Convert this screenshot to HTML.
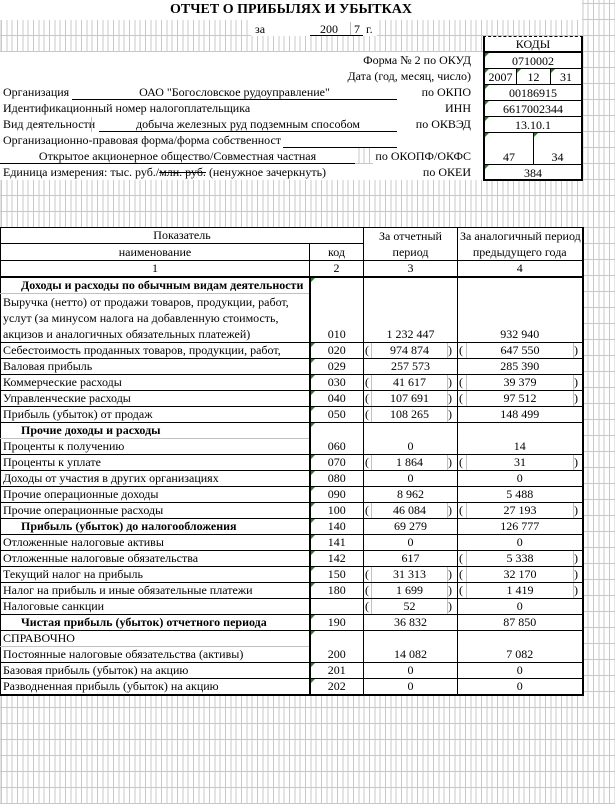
<!DOCTYPE html>
<html><head><meta charset="utf-8">
<style>
*{margin:0;padding:0;box-sizing:border-box}
html,body{width:615px;height:804px;overflow:hidden}
body{position:relative;font-family:"Liberation Serif","DejaVu Serif",serif;font-size:12px;color:#000;
background-color:#fff;
background-image:repeating-linear-gradient(to right,#c8c8c8 0 1px,transparent 1px 5.333px),repeating-linear-gradient(to bottom,#c8c8c8 0 1px,transparent 1px 16px);
background-position:1px 0,0 3px;}
.a{position:absolute;white-space:nowrap;line-height:16px}
.w{position:absolute;background:#fff}
.r{text-align:right}.c{text-align:center}
.ul{position:absolute;height:1px;background:#000}
.box{position:absolute;left:483px;top:36px;width:100px;height:145px;background:#fff;border-left:2px solid #000;border-right:2px solid #000;border-bottom:2px solid #000;border-top:1px dashed #000}
.hl{position:absolute;height:1px;background:#000}
.vl{position:absolute;width:1px;background:#000}
.gt{position:absolute;width:0;height:0;border-top:4px solid #1a8a1a;border-right:4px solid transparent}
table{position:absolute;left:0;top:227px;border-collapse:collapse;table-layout:fixed;background:#fff;width:582px}
td{border:1px solid #000;padding:0 2px;line-height:15px;height:15.7px;vertical-align:bottom;white-space:nowrap;overflow:hidden;position:relative}
td.n{text-align:left}
td.k,td.v{text-align:center}
td.lp{border-right:1px solid #c0c0c0;padding:0 0 0 1px;text-align:left}
td.rp{border-left:1px solid #c0c0c0;padding:0;text-align:left}
td.m{border-left:1px solid #c0c0c0;border-right:1px solid #c0c0c0}
td.k{border-left:2px solid #000}
tr.hb td{border-bottom:2px solid #000}
td.last{border-right:2px solid #000}
tr.bot td{border-bottom:2px solid #000}
b{font-weight:bold}
.ind{padding-left:20px}
td i{position:absolute;left:0;top:0;width:0;height:0;border-top:4px solid #1a8a1a;border-right:4px solid transparent}
td.nb{border-bottom-color:#c0c0c0}
</style></head><body>

<div class="w" style="left:0;top:0;width:582px;height:20px"></div>
<div class="w" style="left:251px;top:20px;width:126px;height:16px"></div>
<div class="w" style="left:0;top:52px;width:483px;height:96px"></div>
<div class="w" style="left:0;top:148px;width:355px;height:16px"></div>
<div class="w" style="left:373px;top:148px;width:110px;height:16px"></div>
<div class="w" style="left:0;top:164px;width:483px;height:16px"></div>

<div class="a c" style="left:0;top:2px;width:582px;font-size:14px;font-weight:bold">ОТЧЕТ О ПРИБЫЛЯХ И УБЫТКАХ</div>
<div class="a" style="left:255px;top:21px">за</div>
<div class="a" style="left:320px;top:21px">200</div>
<div class="a" style="left:354px;top:21px">7</div>
<div class="a" style="left:366px;top:21px">г.</div>
<div class="ul" style="left:310px;top:35px;width:53px"></div>
<div class="vl" style="left:350px;top:22px;height:13px;background:#bbb"></div>

<div class="a r" style="left:280px;top:52px;width:191px">Форма № 2 по ОКУД</div>
<div class="a r" style="left:280px;top:68px;width:191px">Дата (год, месяц, число)</div>

<div class="a" style="left:3px;top:84px">Организация</div>
<div class="a c" style="left:72px;top:84px;width:325px">ОАО "Богословское рудоуправление"</div>
<div class="ul" style="left:72px;top:99px;width:325px"></div>
<div class="a r" style="left:380px;top:84px;width:91px">по ОКПО</div>

<div class="a" style="left:3px;top:100px">Идентификационный номер налогоплательщика</div>
<div class="a r" style="left:380px;top:100px;width:91px">ИНН</div>

<div class="a" style="left:3px;top:116px">Вид деятельности</div>
<div class="vl" style="left:91px;top:117px;height:15px;background:#bbb"></div>
<div class="a c" style="left:99px;top:116px;width:298px">добыча железных руд подземным способом</div>
<div class="ul" style="left:99px;top:131px;width:298px"></div>
<div class="a r" style="left:380px;top:116px;width:91px">по ОКВЭД</div>

<div class="a" style="left:3px;top:132px">Организационно-правовая форма/форма собственност</div>
<div class="ul" style="left:283px;top:147px;width:114px"></div>

<div class="a c" style="left:0;top:148px;width:355px">Открытое акционерное общество/Совместная частная</div>
<div class="ul" style="left:0;top:163px;width:355px"></div>
<div class="a r" style="left:370px;top:148px;width:101px">по ОКОПФ/ОКФС</div>

<div class="a" style="left:3px;top:164px">Единица измерения: тыс. руб./<s>млн. руб.</s> (ненужное зачеркнуть)</div>
<div class="a r" style="left:380px;top:164px;width:91px">по ОКЕИ</div>

<div class="box"></div>
<div class="a c" style="left:483px;top:36px;width:100px">КОДЫ</div>
<div class="hl" style="left:483px;top:51px;width:100px;height:2px"></div>
<div class="hl" style="left:483px;top:68px;width:100px"></div>
<div class="hl" style="left:483px;top:84px;width:100px"></div>
<div class="hl" style="left:483px;top:100px;width:100px"></div>
<div class="hl" style="left:483px;top:116px;width:100px"></div>
<div class="hl" style="left:483px;top:132px;width:100px"></div>
<div class="hl" style="left:483px;top:164px;width:100px"></div>
<div class="vl" style="left:516px;top:68px;height:16px"></div>
<div class="vl" style="left:550px;top:68px;height:16px"></div>
<div class="vl" style="left:533px;top:132px;height:32px"></div>
<div class="a c" style="left:485px;top:53px;width:96px">0710002</div>
<div class="a c" style="left:485px;top:69px;width:31px">2007</div>
<div class="a c" style="left:517px;top:69px;width:33px">12</div>
<div class="a c" style="left:551px;top:69px;width:30px">31</div>
<div class="a c" style="left:485px;top:85px;width:96px">00186915</div>
<div class="a c" style="left:485px;top:101px;width:96px">6617002344</div>
<div class="a c" style="left:485px;top:117px;width:96px">13.10.1</div>
<div class="a c" style="left:485px;top:149px;width:48px">47</div>
<div class="a c" style="left:534px;top:149px;width:47px">34</div>
<div class="a c" style="left:485px;top:165px;width:96px">384</div>
<div class="gt" style="left:485px;top:53px"></div>
<div class="gt" style="left:485px;top:69px"></div>
<div class="gt" style="left:517px;top:69px"></div>
<div class="gt" style="left:551px;top:69px"></div>
<div class="gt" style="left:485px;top:85px"></div>
<div class="gt" style="left:485px;top:101px"></div>
<div class="gt" style="left:485px;top:117px"></div>
<div class="gt" style="left:485px;top:133px"></div>
<div class="gt" style="left:534px;top:133px"></div>
<div class="gt" style="left:485px;top:165px"></div>

<table>
<colgroup><col style="width:309px"><col style="width:54px"><col style="width:8px"><col style="width:76px"><col style="width:10px"><col style="width:9px"><col style="width:107px"><col style="width:9px"></colgroup>
<tr><td colspan="2" class="v" style="height:16px">Показатель</td><td colspan="3" rowspan="2" class="v" style="line-height:16px">За отчетный<br>период</td><td colspan="3" rowspan="2" class="v last" style="line-height:16px">За аналогичный период<br>предыдущего года</td></tr>
<tr><td class="v" style="height:17px">наименование</td><td class="v">код</td></tr>
<tr class="hb"><td class="v" style="height:15px">1</td><td class="v">2</td><td colspan="3" class="v">3</td><td colspan="3" class="v last">4</td></tr>

<tr><td class="n nb ind" style="height:16px"><b>Доходы и расходы по обычным видам деятельности</b></td><td class="k" rowspan="2"><i></i>010</td><td colspan="3" rowspan="2" class="v">1 232 447</td><td colspan="3" rowspan="2" class="v last">932 940</td></tr>
<tr><td class="n" style="height:49px;line-height:16px;white-space:normal">Выручка (нетто) от продажи товаров, продукции, работ,<br>услут (за минусом налога на добавленную стоимость,<br>акцизов и аналогичных обязательных платежей)</td></tr>

<tr><td class="n">Себестоимость проданных товаров, продукции, работ,</td><td class="k"><i></i>020</td><td class="lp">(</td><td class="m v">974 874</td><td class="rp">)</td><td class="lp">(</td><td class="m v">647 550</td><td class="rp last">)</td></tr>
<tr><td class="n">Валовая прибыль</td><td class="k"><i></i>029</td><td colspan="3" class="v">257 573</td><td colspan="3" class="v last">285 390</td></tr>
<tr><td class="n">Коммерческие расходы</td><td class="k"><i></i>030</td><td class="lp">(</td><td class="m v">41 617</td><td class="rp">)</td><td class="lp">(</td><td class="m v">39 379</td><td class="rp last">)</td></tr>
<tr><td class="n">Управленческие расходы</td><td class="k"><i></i>040</td><td class="lp">(</td><td class="m v">107 691</td><td class="rp">)</td><td class="lp">(</td><td class="m v">97 512</td><td class="rp last">)</td></tr>
<tr><td class="n">Прибыль (убыток) от продаж</td><td class="k"><i></i>050</td><td class="lp">(</td><td class="m v">108 265</td><td class="rp">)</td><td colspan="3" class="v last">148 499</td></tr>

<tr><td class="n nb ind"><b>Прочие доходы и расходы</b></td><td class="k" rowspan="2"><i></i>060</td><td colspan="3" rowspan="2" class="v">0</td><td colspan="3" rowspan="2" class="v last">14</td></tr>
<tr><td class="n">Проценты к получению</td></tr>
<tr><td class="n">Проценты к уплате</td><td class="k"><i></i>070</td><td class="lp">(</td><td class="m v">1 864</td><td class="rp">)</td><td class="lp">(</td><td class="m v">31</td><td class="rp last">)</td></tr>
<tr><td class="n">Доходы от участия в других организациях</td><td class="k"><i></i>080</td><td colspan="3" class="v">0</td><td colspan="3" class="v last">0</td></tr>
<tr><td class="n">Прочие операционные доходы</td><td class="k"><i></i>090</td><td colspan="3" class="v">8 962</td><td colspan="3" class="v last">5 488</td></tr>
<tr><td class="n">Прочие операционные расходы</td><td class="k"><i></i>100</td><td class="lp">(</td><td class="m v">46 084</td><td class="rp">)</td><td class="lp">(</td><td class="m v">27 193</td><td class="rp last">)</td></tr>
<tr><td class="n ind"><b>Прибыль (убыток) до налогообложения</b></td><td class="k"><i></i>140</td><td colspan="3" class="v">69 279</td><td colspan="3" class="v last">126 777</td></tr>
<tr><td class="n">Отложенные налоговые активы</td><td class="k"><i></i>141</td><td colspan="3" class="v">0</td><td colspan="3" class="v last">0</td></tr>
<tr><td class="n">Отложенные налоговые обязательства</td><td class="k"><i></i>142</td><td colspan="3" class="v">617</td><td class="lp">(</td><td class="m v">5 338</td><td class="rp last">)</td></tr>
<tr><td class="n">Текущий налог на прибыль</td><td class="k"><i></i>150</td><td class="lp">(</td><td class="m v">31 313</td><td class="rp">)</td><td class="lp">(</td><td class="m v">32 170</td><td class="rp last">)</td></tr>
<tr><td class="n">Налог на прибыль и иные обязательные платежи</td><td class="k"><i></i>180</td><td class="lp">(</td><td class="m v">1 699</td><td class="rp">)</td><td class="lp">(</td><td class="m v">1 419</td><td class="rp last">)</td></tr>
<tr><td class="n">Налоговые санкции</td><td class="k"></td><td class="lp">(</td><td class="m v">52</td><td class="rp">)</td><td colspan="3" class="v last">0</td></tr>
<tr><td class="n ind"><b>Чистая прибыль (убыток) отчетного периода</b></td><td class="k"><i></i>190</td><td colspan="3" class="v">36 832</td><td colspan="3" class="v last">87 850</td></tr>
<tr><td class="n nb">СПРАВОЧНО</td><td class="k" rowspan="2"><i></i>200</td><td colspan="3" rowspan="2" class="v">14 082</td><td colspan="3" rowspan="2" class="v last">7 082</td></tr>
<tr><td class="n">Постоянные налоговые обязательства (активы)</td></tr>
<tr><td class="n">Базовая прибыль (убыток) на акцию</td><td class="k"><i></i>201</td><td colspan="3" class="v">0</td><td colspan="3" class="v last">0</td></tr>
<tr class="bot"><td class="n">Разводненная прибыль (убыток) на акцию</td><td class="k"><i></i>202</td><td colspan="3" class="v">0</td><td colspan="3" class="v last">0</td></tr>
</table>
</body></html>
